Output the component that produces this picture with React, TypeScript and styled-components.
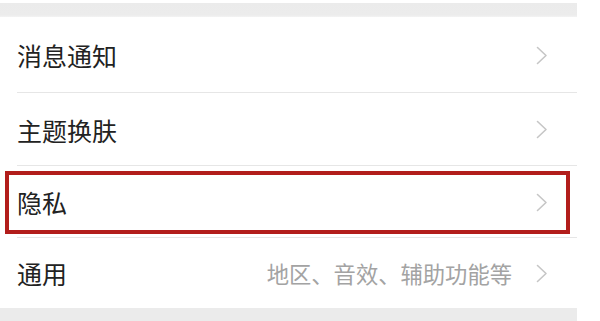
import React from "react";
import styled, { createGlobalStyle } from "styled-components";

const Global = createGlobalStyle`
  html, body { margin: 0; padding: 0; background: #ffffff; }
  body { width: 600px; height: 321px; overflow: hidden; font-family: "Noto Sans CJK SC", "Noto Sans", sans-serif; }
`;

const Page = styled.div`
  width: 600px;
  height: 321px;
  background: #ffffff;
  display: flex;
`;

const Column = styled.div`
  width: 577px;
  display: flex;
  flex-direction: column;
`;

const TopBand = styled.div`
  height: 14px;
  margin-top: 3px;
  background: linear-gradient(#ebebeb, #ececec 85%, #f3f3f3);
  flex: none;
`;

const BottomBand = styled.div`
  flex: 1;
  background: #ebebeb;
`;

const List = styled.div`
  display: flex;
  flex-direction: column;
  background: #ffffff;
`;

const Row = styled.div<{ $h: number; $last?: boolean }>`
  position: relative;
  height: ${(p) => p.$h}px;
  display: flex;
  align-items: center;
  padding: 0 29px 0 17px;
  box-sizing: border-box;
  &::after {
    content: "";
    display: ${(p) => (p.$last ? "none" : "block")};
    position: absolute;
    left: 17px;
    right: 0;
    bottom: 0;
    height: 1px;
    background: #e6e6e6;
  }
`;

const Title = styled.span`
  flex: 1;
  font-size: 25px;
  color: #222222;
  line-height: 1;
  margin-top: 1px;
`;

const Hint = styled.span`
  font-size: 22.3px;
  color: #a3a3a3;
  line-height: 1;
  margin-right: 24px;
`;

const Highlight = styled.div`
  position: absolute;
  left: 5px;
  right: 7px;
  top: 5px;
  bottom: 4px;
  border: 4px solid #b21d1b;
  pointer-events: none;
`;

const Chevron = () => (
  <svg width="12" height="19" viewBox="0 0 12 19" style={{ flex: "none" }}>
    <polyline points="1.5,1.5 10,9.5 1.5,17.5" fill="none" stroke="#c6c6c6" strokeWidth="1.6" strokeLinecap="round" strokeLinejoin="round" />
  </svg>
);

const items = [
  { title: "消息通知", h: 76 },
  { title: "主题换肤", h: 73 },
  { title: "隐私", h: 72, hl: true },
  { title: "通用", h: 70, hint: "地区、音效、辅助功能等", last: true },
];

export default function App() {
  return (
    <>
      <Global />
      <Page>
        <Column>
          <TopBand />
          <List>
            {items.map((it) => (
              <Row key={it.title} $h={it.h} $last={it.last}>
                <Title>{it.title}</Title>
                {it.hint && <Hint>{it.hint}</Hint>}
                <Chevron />
                {it.hl && <Highlight />}
              </Row>
            ))}
          </List>
          <BottomBand />
        </Column>
      </Page>
    </>
  );
}
